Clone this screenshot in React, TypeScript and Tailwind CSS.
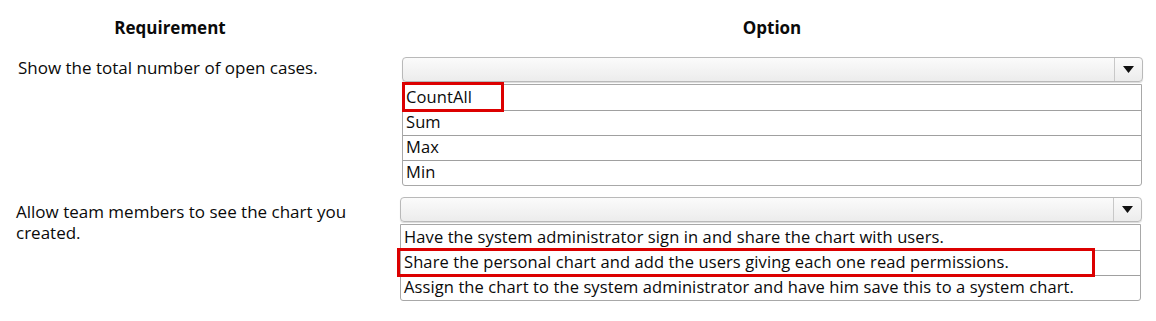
const font = { fontFamily: '"Open Sans", "Noto Sans", sans-serif' };

function Arrow() {
  return (
    <svg width="11" height="7" viewBox="0 0 11 7">
      <path d="M0 0H11L5.5 7Z" fill="#111" />
    </svg>
  );
}

function Select({ options, picked, box }: { options: string[]; picked: number; box: string }) {
  return (
    <div className="flex flex-col">
      <div className="flex h-[25px] rounded-[4px] border border-[#b9b9b9] bg-gradient-to-b from-[#fbfbfb] to-[#ececec] shadow-[0_1px_1px_rgba(0,0,0,0.15)]">
        <div className="flex-1" />
        <div className="flex w-[28px] items-center justify-center border-l border-[#c8c8c8]">
          <Arrow />
        </div>
      </div>
      <div className="mt-[2px] mr-[1px] flex flex-col rounded-b-[3px] border border-[#a8a8a8] bg-white">
        {options.map((o, i) => (
          <div
            key={o}
            className={`relative flex h-[25px] items-center pl-[3px] text-[16.5px] font-medium tracking-[0.1px] text-[#0a0a0a] ${i > 0 ? "border-t border-[#a0a0a0]" : ""}`}
          >
            {i === picked && (
              <div className={`absolute top-[-3px] bottom-[-2px] z-10 border-[3px] border-[#dc0000] ${box}`} />
            )}
            <span className="relative">{o}</span>
          </div>
        ))}
      </div>
    </div>
  );
}

export default function App() {
  return (
    <div className="h-[321px] w-[1156px] bg-white text-[#0a0a0a]" style={font}>
      <div className="flex pt-[15px]">
        <div className="w-[340px] text-center text-[17px] font-bold">Requirement</div>
        <div className="w-[744px] pl-[120px] text-center text-[17px] font-bold">Option</div>
      </div>

      <div className="mt-[16px] flex">
        <div className="w-[402px] pl-[18px] text-[17px] font-medium leading-[21px]">Show the total number of open cases.</div>
        <div className="w-[741px]">
          <Select options={["CountAll", "Sum", "Max", "Min"]} picked={0} box="left-[-1px] w-[102px]" />
        </div>
      </div>

      <div className="mt-[11px] flex">
        <div className="w-[400px] pt-[4px] pl-[16px] pr-[30px] text-[17px] font-medium leading-[21px]">
          Allow team members to see the chart you created.
        </div>
        <div className="w-[742px]">
          <Select
            options={[
              "Have the system administrator sign in and share the chart with users.",
              "Share the personal chart and add the users giving each one read permissions.",
              "Assign the chart to the system administrator and have him save this to a system chart.",
            ]}
            picked={1}
            box="left-[-4px] w-[698px]"
          />
        </div>
      </div>
    </div>
  );
}
